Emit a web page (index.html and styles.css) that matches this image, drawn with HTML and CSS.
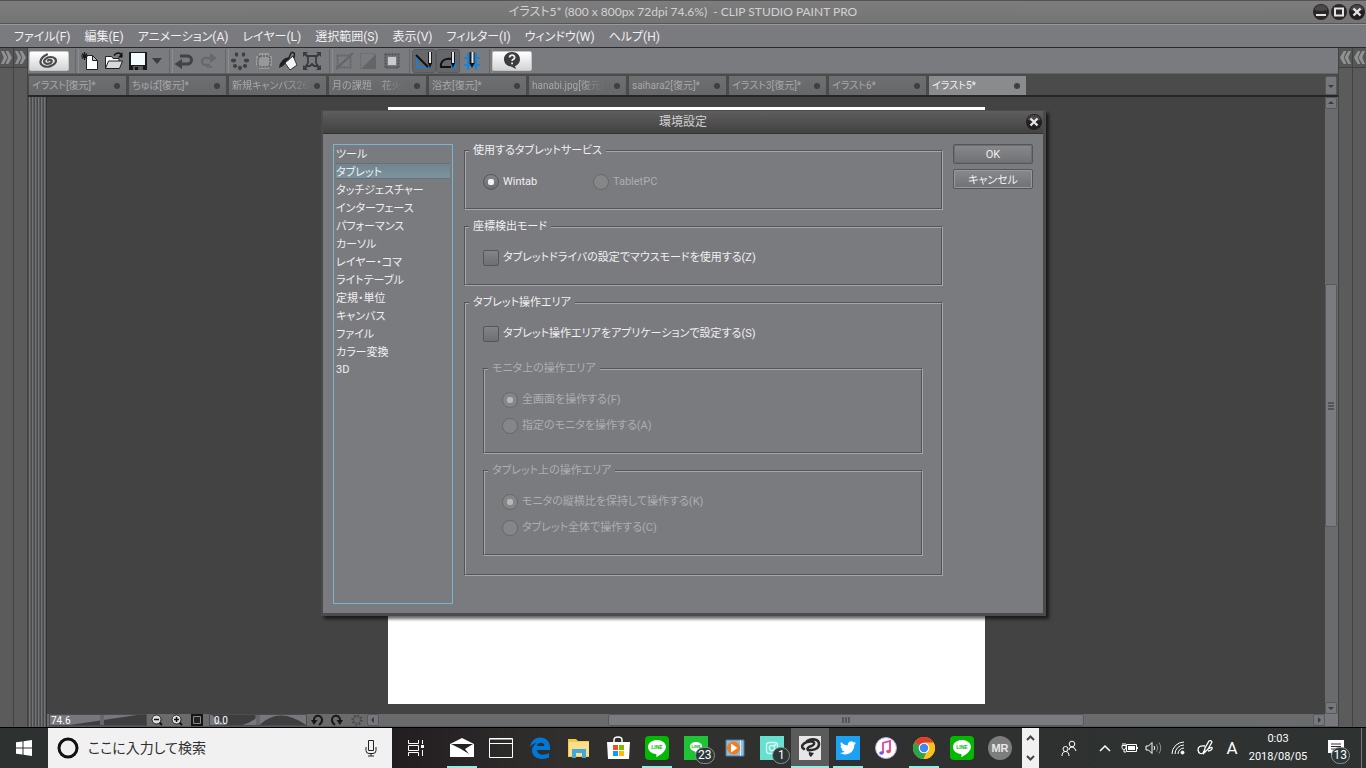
FILE: index.html
```html
<!DOCTYPE html>
<html lang="ja">
<head>
<meta charset="utf-8">
<title>CLIP STUDIO PAINT PRO</title>
<link rel="stylesheet" href="styles.css">
</head>
<body>
<svg class="defs" aria-hidden="true">
  <symbol id="close" viewBox="0 0 16 16"><circle cx="8" cy="8" r="8" fill="#231f20"/><path d="M1.500 6a6.500 5 0 0 1 13 0q-6.500 2-13 0z" fill="#4a4648"/><path d="M4.500 4.500l7 7M11.500 4.500l-7 7" stroke="#e4e4e4" stroke-width="2.400"/></symbol>
  <symbol id="chev-r" viewBox="0 0 12 14"><path d="M0 0h3l4 7-4 7H0l3-7zM5 0h3l4 7-4 7H5l3-7z" fill="#909193"/></symbol>
  <symbol id="chev-l" viewBox="0 0 12 14"><path d="M12 0H9L5 7l4 7h3L9 7zM7 0H4L0 7l4 7h3L4 7z" fill="#909193"/></symbol>
</svg>

<header class="titlebar">
  <h1>イラスト5* (800 x 800px 72dpi 74.6%)&nbsp; - CLIP STUDIO PAINT PRO</h1>
  <div class="window-buttons">
    <button aria-label="最小化"><svg viewBox="0 0 16 16"><circle cx="8" cy="8" r="8" fill="#2b2728"/><path d="M1.500 6a6.500 5 0 0 1 13 0q-6.500 2-13 0z" fill="#4c484a"/><path d="M3 11h10" stroke="#e4e4e4" stroke-width="2"/></svg></button>
    <button aria-label="最大化"><svg viewBox="0 0 16 16"><circle cx="8" cy="8" r="8" fill="#2b2728"/><path d="M4 4.500h8v7H4z" fill="none" stroke="#e4e4e4" stroke-width="2"/></svg></button>
    <button aria-label="閉じる"><svg><use href="#close"/></svg></button>
  </div>
</header>

<nav class="menubar">
  <button>ファイル(F)</button><button>編集(E)</button><button>アニメーション(A)</button><button>レイヤー(L)</button><button>選択範囲(S)</button><button>表示(V)</button><button>フィルター(I)</button><button>ウィンドウ(W)</button><button>ヘルプ(H)</button>
</nav>

<div class="workspace">
  <aside class="dock"><button aria-label="開く"><svg><use href="#chev-r"/></svg></button></aside>
  <aside class="dock"><button aria-label="開く"><svg><use href="#chev-r"/></svg></button></aside>

  <main class="editor">
    <div class="toolbar">
      <button class="wide" aria-label="CLIP STUDIO"><svg width="22" height="16" viewBox="0 0 22 16"><path d="M10 7.500c2-1.500 4.500-.5 3.500 1.500S8 11.500 6.500 9.500 8.500 4 12.500 4 19 6.500 17.500 9.500 10 15 5.500 13 1 5.500 9 1.500" fill="none" stroke="#4b4b4d" stroke-width="2.200" stroke-linecap="round"/></svg></button>
      <i class="sep"></i>
      <button aria-label="新規"><svg width="20" height="20" viewBox="0 0 20 20"><path d="M6.500 4.500h6l5 5v9h-11z" fill="#fff" stroke="#222"/><path d="M12.500 4.500v5h5z" fill="#bbb" stroke="#222"/><path d="M4.500 1v8M1 5h7M2 2.500l5 5M7 2.500l-5 5" stroke="#1b1b1b" stroke-width="1.200"/></svg></button>
      <button aria-label="開く"><svg width="20" height="20" viewBox="0 0 20 20"><path d="M1.500 17.500v-12h6l1.500 2h6v3" fill="#fff" stroke="#222"/><path d="M1.500 17.500l3-7.500h14l-3 7.500z" fill="#d9d9d9" stroke="#222"/><path d="M10 4.500q3-4 7-1.500" fill="none" stroke="#111" stroke-width="1.600"/><path d="M18.500 1v5.500H14z" fill="#111"/></svg></button>
      <button aria-label="保存"><svg width="20" height="20" viewBox="0 0 20 20"><path d="M1 1h18v18H1z" fill="#19191b"/><path d="M3 2h14v12H3z" fill="#f4fbfd"/><path d="M5 15h10v4H5z" fill="#55565a"/><path d="M7 16h3v3H7z" fill="#111"/></svg></button>
      <button class="arrow" aria-label="その他"><svg width="10" height="6" viewBox="0 0 10 6"><path d="M0 0h10L5 6z" fill="#3c3c3e"/></svg></button>
      <i class="sep"></i>
      <button aria-label="取り消し"><svg width="20" height="18" viewBox="0 0 20 18"><path d="M6 4h7.500a4 4 0 0 1 0 8H6" fill="none" stroke="#414244" stroke-width="3"/><path d="M8 7v10l-7.500-5z" fill="#414244"/></svg></button>
      <button aria-label="やり直し"><svg width="20" height="18" viewBox="0 0 20 18"><path d="M12 13H6a4 4 0 0 1 0-7H14" fill="none" stroke="#67686b" stroke-width="2.400"/><path d="M12 1v10l7-5zM9 14h2v2H9zM12 14h2v2h-2z" fill="#67686b"/></svg></button>
      <i class="sep"></i>
      <button aria-label="消去"><svg width="20" height="20" viewBox="0 0 20 20" fill="#3f4042"><ellipse cx="6.500" cy="3.500" rx="1.700" ry="2.200"/><ellipse cx="13.500" cy="3.500" rx="1.700" ry="2.200"/><ellipse cx="3.500" cy="9.500" rx="2.600" ry="1.900"/><ellipse cx="16.500" cy="9.500" rx="2.600" ry="1.900"/><circle cx="5" cy="15" r="2.100"/><circle cx="15" cy="15" r="2.100"/><ellipse cx="10" cy="17" rx="1.900" ry="2.200"/></svg></button>
      <button aria-label="選択範囲外を消去"><svg width="20" height="20" viewBox="0 0 20 20"><path d="M5 2h10v16H5zM2 5h16v10H2z" fill="#98999b"/><path d="M6 5h8l2 2v7l-2 2H6l-2-2V7z" fill="#97989a" stroke="#5b5c5e" stroke-dasharray="2 1" stroke-width="1.500"/></svg></button>
      <button aria-label="塗りつぶし"><svg width="20" height="20" viewBox="0 0 20 20"><path d="M12 6Q2 7 1 17q5-2 8-6z" fill="#202022"/><path d="M7 12l8-7 4 9-7 5z" fill="#f4f4f4" stroke="#333"/><path d="M10 9l3-7q2-1.500 3.500.5L16 7" fill="none" stroke="#222" stroke-width="1.500"/></svg></button>
      <button aria-label="拡大縮小"><svg width="20" height="20" viewBox="0 0 20 20"><path d="M2 2l4 4M18 2l-4 4M2 18l4-4M18 18l-4-4" stroke="#3a3b3d" stroke-width="2"/><path d="M1 1h5L1 6zM19 1h-5l5 5zM1 19h5l-5-5zM19 19h-5l5-5z" fill="#3a3b3d"/><path d="M6 5h8v6q0 2 2 4h-4l-2-2-2 2H4q2-2 2-4z" fill="none" stroke="#3a3b3d" stroke-width="1.800"/></svg></button>
      <i class="sep"></i>
      <button aria-label="選択を解除"><svg width="20" height="20" viewBox="0 0 20 20"><path d="M3.500 4.500h13v12h-13z" fill="none" stroke="#646567" stroke-width="2" stroke-dasharray="2 1"/><path d="M2 18L19 2" stroke="#646567" stroke-width="2"/></svg></button>
      <button aria-label="選択範囲を反転"><svg width="20" height="20" viewBox="0 0 20 20"><path d="M2.500 2.500h14v15h-14z" fill="none" stroke="#6a6b6d" stroke-dasharray="2 1"/><path d="M18 3v15H3z" fill="#646567"/></svg></button>
      <button aria-label="選択範囲の境界線"><svg width="20" height="20" viewBox="0 0 20 20"><path d="M3.500 3.500h13v13h-13z" fill="none" stroke="#4d4e50" stroke-width="2" stroke-dasharray="2 1"/><path d="M5 5h10v10H5z" fill="#77787b"/><path d="M6 6h8v8H6z" fill="#cbcbcb"/></svg></button>
      <i class="sep"></i>
      <button class="on" aria-label="定規にスナップ"><svg width="20" height="20" viewBox="0 0 20 20"><path d="M3 4v12h13" fill="none" stroke="#1683dc" stroke-width="1.500"/><path d="M2 4l12 12" stroke="#111" stroke-width="2"/><path d="M16 1v12" stroke="#1a1a1c" stroke-width="4"/><path d="M16 1v11" stroke="#e2e2e2" stroke-width="2"/><path d="M14 12h4l-2 5z" fill="#111"/></svg></button>
      <button class="on" aria-label="特殊定規にスナップ"><svg width="20" height="20" viewBox="0 0 20 20"><path d="M2 16h15V9" fill="none" stroke="#1683dc" stroke-width="2"/><path d="M13 16H3q-1-4 3-7 3-2 7-1" fill="none" stroke="#111" stroke-width="2"/><path d="M15 1v12" stroke="#1a1a1c" stroke-width="4"/><path d="M15 1v11" stroke="#e2e2e2" stroke-width="2"/><path d="M13 12h4l-2 5z" fill="#111"/></svg></button>
      <button aria-label="グリッドにスナップ"><svg width="20" height="20" viewBox="0 0 20 20"><path d="M6 2v17M14 2v17M2 7h16M2 14h16" stroke="#1683dc" stroke-width="2"/><path d="M10 1v12" stroke="#1a1a1c" stroke-width="5"/><path d="M10.500 1v11" stroke="#e2e2e2" stroke-width="2"/><path d="M7.500 12h5L10 17z" fill="#111"/></svg></button>
      <i class="sep"></i>
      <button class="wide" aria-label="ヘルプ"><svg width="18" height="17" viewBox="0 0 18 17"><path d="M9 0c5 0 8 3.200 8 7.200 0 3.600-2.500 6.100-5 6.900L13 17l-5-2.600C4 14.200 1 11.300 1 7.200 1 3.200 4 0 9 0z" fill="#3c3c3e"/><path d="M6.500 5.500q.3-2.300 2.600-2.300T11.600 5.400Q11.600 6.800 10 7.500q-.9.500-.9 1.600M9.100 10.500v1.800" fill="none" stroke="#eee" stroke-width="1.800"/></svg></button>
    </div>

    <div class="tabs">
      <button class="tab"><span>イラスト[復元]*</span><i></i></button>
      <button class="tab"><span>ちゅぱ[復元]*</span><i></i></button>
      <button class="tab"><span class="fade">新規キャンバス26[</span><i></i></button>
      <button class="tab"><span class="fade">月の課題　花火[</span><i></i></button>
      <button class="tab"><span>浴衣[復元]*</span><i></i></button>
      <button class="tab"><span class="fade">hanabi.jpg[復元]</span><i></i></button>
      <button class="tab"><span>saihara2[復元]*</span><i></i></button>
      <button class="tab"><span>イラスト3[復元]*</span><i></i></button>
      <button class="tab"><span>イラスト6*</span><i></i></button>
      <button class="tab active"><span>イラスト5*</span><i></i></button>
      <button class="small-button tab-list" aria-label="タブ一覧"><svg viewBox="0 0 12 12"><path d="M3 5h6L6 8z"/></svg></button>
    </div>

    <div class="view">
      <div class="grip-strip"></div>
      <div class="view-main">
        <div class="stage"><div class="paper"></div></div>
        <div class="vscroll">
          <button class="small-button" aria-label="上へ"><svg viewBox="0 0 12 12"><path d="M3 7h6L6 4z"/></svg></button>
          <div class="vtrack"><div class="vthumb"><i></i><i></i><i></i></div></div>
          <button class="small-button" aria-label="下へ"><svg viewBox="0 0 12 12"><path d="M3 5h6L6 8z"/></svg></button>
        </div>
        <div class="statusbar">
          <label class="slider"><svg viewBox="0 0 97 11" preserveAspectRatio="none"><path d="M20 11h77V0H88z" fill="#3e3e40"/></svg><span>74.6</span><input type="range" value="54" aria-label="拡大率"></label>
          <button aria-label="縮小"><svg viewBox="0 0 12 12"><path d="M8 8l3 3" stroke="#111" stroke-width="2"/><circle cx="5.500" cy="5.500" r="4.500" fill="#ddd" stroke="#222"/><path d="M3 5.500h5" stroke="#111" stroke-width="1.500"/></svg></button>
          <button aria-label="拡大"><svg viewBox="0 0 12 12"><path d="M8 8l3 3" stroke="#111" stroke-width="2"/><circle cx="5.500" cy="5.500" r="4.500" fill="#ddd" stroke="#222"/><path d="M3 5.500h5M5.500 3v5" stroke="#111" stroke-width="1.500"/></svg></button>
          <button aria-label="全体表示"><svg viewBox="0 0 12 12"><path d="M0 0h12v12H0z" fill="#151515"/><path d="M2.500 2.500h7v7h-7z" fill="#222" stroke="#8a8a8a"/></svg></button>
          <label class="slider rotate"><svg viewBox="0 0 97 11" preserveAspectRatio="none"><path d="M2 0Q22 22 46 4V0zM50 11Q70-10 97 11z" fill="#3e3e40"/></svg><span>0.0</span><input type="range" value="50" aria-label="回転"></label>
          <button aria-label="左回転"><svg viewBox="0 0 12 12"><path d="M3 8V5.500a4 4 0 0 1 8 .5q0 3-3 5" fill="none" stroke="#181818" stroke-width="2"/><path d="M0 6h6.500L3 11z" fill="#181818"/></svg></button>
          <button aria-label="右回転"><svg viewBox="0 0 12 12"><path d="M9 8V5.500a4 4 0 0 0-8 .5q0 3 3 5" fill="none" stroke="#181818" stroke-width="2"/><path d="M12 6H5.500L9 11z" fill="#181818"/></svg></button>
          <button aria-label="回転をリセット"><svg viewBox="0 0 12 12"><circle cx="6" cy="6" r="4.500" fill="none" stroke="#454547" stroke-width="2" stroke-dasharray="1.500 2"/><circle cx="6" cy="6" r="3.500" fill="none" stroke="#505153"/></svg></button>
          <button class="small-button" aria-label="左へ"><svg viewBox="0 0 12 12"><path d="M7 3v6L4 6z"/></svg></button>
          <div class="htrack"><div class="hthumb"><i></i><i></i><i></i></div></div>
          <button class="small-button" aria-label="右へ"><svg viewBox="0 0 12 12"><path d="M5 3v6l3-3z"/></svg></button>
          <div class="corner"></div>
        </div>
      </div>
    </div>
  </main>

  <aside class="dock right"><button aria-label="開く"><svg><use href="#chev-l"/></svg></button></aside>
  <aside class="dock right"><button aria-label="開く"><svg><use href="#chev-l"/></svg></button></aside>
</div>

<section class="dialog" role="dialog" aria-labelledby="dlg-title">
  <header><h2 id="dlg-title">環境設定</h2><button aria-label="閉じる"><svg><use href="#close"/></svg></button></header>
  <form class="dialog-body">
    <ul class="categories">
      <li><button type="button">ツール</button></li>
      <li><button type="button" class="selected">タブレット</button></li>
      <li><button type="button">タッチジェスチャー</button></li>
      <li><button type="button">インターフェース</button></li>
      <li><button type="button">パフォーマンス</button></li>
      <li><button type="button">カーソル</button></li>
      <li><button type="button">レイヤー・コマ</button></li>
      <li><button type="button">ライトテーブル</button></li>
      <li><button type="button">定規・単位</button></li>
      <li><button type="button">キャンバス</button></li>
      <li><button type="button">ファイル</button></li>
      <li><button type="button">カラー変換</button></li>
      <li><button type="button">3D</button></li>
    </ul>
    <div class="groups">
      <fieldset>
        <legend>使用するタブレットサービス</legend>
        <div class="pair">
          <label><input type="radio" name="service" checked>Wintab</label>
          <label class="off"><input type="radio" name="service" disabled>TabletPC</label>
        </div>
      </fieldset>
      <fieldset>
        <legend>座標検出モード</legend>
        <label><input type="checkbox">タブレットドライバの設定でマウスモードを使用する(Z)</label>
      </fieldset>
      <fieldset>
        <legend>タブレット操作エリア</legend>
        <label class="area-toggle"><input type="checkbox">タブレット操作エリアをアプリケーションで設定する(S)</label>
        <div class="groups">
          <fieldset disabled>
            <legend>モニタ上の操作エリア</legend>
            <div class="stack">
              <label><input type="radio" name="monitor" checked>全画面を操作する(F)</label>
              <label><input type="radio" name="monitor">指定のモニタを操作する(A)</label>
            </div>
          </fieldset>
          <fieldset disabled>
            <legend>タブレット上の操作エリア</legend>
            <div class="stack">
              <label><input type="radio" name="tablet" checked>モニタの縦横比を保持して操作する(K)</label>
              <label><input type="radio" name="tablet">タブレット全体で操作する(C)</label>
            </div>
          </fieldset>
        </div>
      </fieldset>
    </div>
    <div class="actions">
      <button type="button" class="default">OK</button>
      <button type="button">キャンセル</button>
    </div>
  </form>
</section>

<footer class="taskbar">
  <button class="start" aria-label="スタート"><svg width="16" height="16" viewBox="0 0 16 16" fill="#fff"><path d="M0 2.300l6.500-.9v6.100H0zM7.500 1.200L16 0v7.500H7.500zM0 8.500h6.500v6.100L0 13.700zM7.500 8.500H16V16l-8.500-1.200z"/></svg></button>
  <div class="search">
    <svg width="22" height="22" viewBox="0 0 22 22"><circle cx="11" cy="11" r="9" fill="none" stroke="#111" stroke-width="3"/></svg>
    <input type="text" placeholder="ここに入力して検索" aria-label="検索">
    <svg width="12" height="18" viewBox="0 0 12 18" fill="none" stroke="#222"><path d="M3.500 1.500h5v10h-5zM1 8v3.500q0 3 3 3h4q3 0 3-3V8M6 14.500V17M3 17h6"/></svg>
  </div>
  <button class="taskview" aria-label="タスクビュー"><svg width="18" height="16" viewBox="0 0 18 16" fill="none" stroke="#fff"><path d="M1.500 0v3.500h10V0M1.500 5.500h10v5h-10zM1.500 16v-3.500h10V16M15.500 0v4M15.500 10v6"/><path d="M14 5h3v3h-3z" fill="#fff" stroke="none"/></svg></button>
  <div class="apps">
    <button class="open" aria-label="メール"><svg viewBox="0 0 24 24"><path d="M0 8L12 2l12 6v13H0z" fill="#fff"/><path d="M1 8h22l-8 5 4 5-8-5z" fill="#222"/></svg></button>
    <button aria-label="ウィンドウ"><svg viewBox="0 0 24 24"><path d="M.5 2.500h23v19H.5zM.5 7.500h23" fill="none" stroke="#fff"/><path d="M1 3h22v1H1z" fill="#999"/></svg></button>
    <button aria-label="Edge"><svg viewBox="0 0 24 24"><path d="M2 11C3 4.500 7.500 1.500 12.300 1.500 18.500 1.500 22 6 22 11.500V14H9c0 5 7 6 12 3v4.500C13 25 3.500 22 4 14c.2-3 2-5.500 5-7C5.500 7.200 3.500 9 2 11zm7-1h7.500C16.500 5.500 9.500 5.500 9 10z" fill="#0078d7"/></svg></button>
    <button aria-label="エクスプローラー"><svg viewBox="0 0 24 24"><path d="M1 3h8l2 2h11v16H1z" fill="#f3c64c"/><path d="M2 6h20v14H2z" fill="#fbe08b"/><path d="M5 13h14v9h-4v-5H9v5H5z" fill="#41a8dd"/></svg></button>
    <button aria-label="ストア"><svg viewBox="0 0 24 24"><path d="M8 7V4q0-3 4-3t4 3v3" fill="none" stroke="#fff" stroke-width="1.500"/><path d="M1 6h23l-1 17H2z" fill="#fff"/><path d="M7 9h5v5H7z" fill="#f25022"/><path d="M13 9h5v5h-5z" fill="#7fba00"/><path d="M7 15h5v5H7z" fill="#00a4ef"/><path d="M13 15h5v5h-5z" fill="#ffb900"/></svg></button>
    <button class="open" aria-label="LINE"><svg viewBox="0 0 24 24"><rect width="24" height="24" rx="4" fill="#00b900"/><path d="M12 4c-5 0-9 3.100-9 7.100 0 3.600 3.300 6.500 7.800 7 .7.100.9.700.5 3.100 4-2 9.700-5.800 9.700-10.100C21 7.100 17 4 12 4z" fill="#fff"/><text x="12" y="13" text-anchor="middle" class="line-word">LINE</text></svg></button>
    <button aria-label="LINE 通知"><svg viewBox="0 0 24 24"><path d="M0 0h24v24H0z" fill="#1fc336"/><path d="M12 6c-3.500 0-6 2-6 4.500S8 15 11 15.500q1 .5 0 2c3-1.500 7-4 7-7S15.500 6 12 6z" fill="#fff"/><text x="12" y="12" text-anchor="middle" class="line-word mini">LINE</text></svg><span class="badge">23</span></button>
    <button aria-label="メディアプレーヤー"><svg viewBox="0 0 24 24"><path d="M3 4h18v16H3z" fill="#8fc0e0" stroke="#4d7c9e"/><path d="M17.500 4v16" stroke="#dbe9f2"/><circle cx="10.500" cy="12" r="6.500" fill="#ef7d22"/><path d="M8 7.500v9l6.500-4.500z" fill="#fff"/></svg></button>
    <button aria-label="Instagram"><svg viewBox="0 0 24 24"><path d="M0 0h24v24H0z" fill="#68e0cf"/><g fill="none" stroke="#d9fff9" stroke-width="1.300"><rect x="6.500" y="6.500" width="11" height="11" rx="3"/><circle cx="12" cy="12" r="2.700"/></g><circle cx="15" cy="9" r="1" fill="#d9fff9"/></svg><span class="badge">1</span></button>
    <button class="open current" aria-label="CLIP STUDIO PAINT"><svg viewBox="0 0 24 24"><path d="M1 0h22v24H1z" fill="#e6e6e6"/><path d="M13 14c-3 1-5-1-2-3 2-1 4-1 5-3 1-3-4-3-7-2-4 1-7 5-3 7M9 5c5-3 12-2 12 3 0 4-4 6-8 6" fill="none" stroke="#2b2b2b" stroke-width="2.600" stroke-linecap="round"/><path d="M11 16l5 1-3 4q-3-2-2-5z" fill="#2b2b2b"/></svg></button>
    <button class="open" aria-label="Twitter"><svg viewBox="0 0 24 24"><path d="M0 0h24v24H0z" fill="#1da1f2"/><path d="M20 6.900c-.6.300-1.200.5-1.900.5.700-.4 1.200-1 1.400-1.800-.6.400-1.300.7-2.100.8a3.300 3.300 0 0 0-5.600 3C9 9.300 6.600 8 5 6c-.9 1.500-.4 3.400 1 4.400-.5 0-1-.2-1.500-.4 0 1.600 1.100 2.900 2.600 3.200-.5.200-1 .2-1.500.1.400 1.300 1.600 2.200 3.100 2.300A6.600 6.600 0 0 1 4 17c5.700 3.500 14.500.4 14.400-8.500.6-.4 1.200-1 1.600-1.600z" fill="#fff"/></svg></button>
    <button aria-label="iTunes"><svg viewBox="0 0 24 24"><circle cx="12" cy="12" r="10.500" fill="#fff" stroke="#b8a5dc"/><path d="M9 17V7l7-2v10" fill="none" stroke="#d946a6" stroke-width="1.800"/><ellipse cx="7.500" cy="17" rx="2.300" ry="1.800" fill="#6a5be0"/><ellipse cx="14.500" cy="15.500" rx="2.300" ry="1.800" fill="#eb4a6e"/></svg></button>
    <button class="open" aria-label="Chrome"><svg viewBox="0 0 24 24"><circle cx="12" cy="12" r="11" fill="#fbc116"/><path d="M12 12L2.500 6.500A11 11 0 0 1 21.500 6.500z" fill="#e33b2e"/><path d="M12 12l5 3-5.500 8A11 11 0 0 1 2.500 6.500z" fill="#2ba24c"/><path d="M14 17l-2.500 6A11 11 0 0 0 21.500 6.500H12l4.500 3z" fill="#fbc116"/><circle cx="12" cy="12" r="5.300" fill="#fff"/><circle cx="12" cy="12" r="4.200" fill="#4285f4"/></svg></button>
    <button aria-label="LINE"><svg viewBox="0 0 24 24"><rect width="24" height="24" rx="4" fill="#00b900"/><path d="M12 4c-5 0-9 3.100-9 7.100 0 3.600 3.300 6.500 7.800 7 .7.100.9.700.5 3.100 4-2 9.700-5.800 9.700-10.100C21 7.100 17 4 12 4z" fill="#fff"/><text x="12" y="13" text-anchor="middle" class="line-word">LINE</text></svg></button>
    <button aria-label="MR"><svg viewBox="0 0 24 24"><circle cx="12" cy="12" r="12" fill="#7d7d7d"/><text x="12" y="16" text-anchor="middle" class="mr-word">MR</text></svg></button>
  </div>
  <div class="spin">
    <button aria-label="上"><svg width="9" height="6" viewBox="0 0 9 6"><path d="M1 5l3.500-3.500L8 5"/></svg></button>
    <button aria-label="下"><svg width="9" height="6" viewBox="0 0 9 6"><path d="M1 1l3.500 3.500L8 1"/></svg></button>
  </div>
  <div class="tray">
    <button class="people" aria-label="People"><svg width="16" height="16" viewBox="0 0 16 16"><circle cx="11" cy="4" r="2.800"/><circle cx="4.500" cy="9" r="2.500"/><path d="M8 10q0-3 3-3t4 4M1 16q0-4.500 3.500-4.500T8 16"/></svg></button>
    <button aria-label="隠れているインジケーター"><svg width="12" height="8" viewBox="0 0 12 8"><path d="M1 7l5-5 5 5" stroke-width="1.500"/></svg></button>
    <button aria-label="電源"><svg width="17" height="12" viewBox="0 0 17 12"><path d="M5.500 2.500h10v7h-10zM1 3.500h4v2q0 2-2 2t-2-2zM2 1v2M4 1v2M3 8v2h2M16.500 5v2"/><path d="M7 4h7v4H7z" fill="#fff" stroke="none"/></svg></button>
    <button aria-label="音量"><svg width="17" height="14" viewBox="0 0 17 14"><path d="M1 5h2.500L7 1.500v11L3.500 9H1zM9 5q1.500 2 0 4"/><path d="M11.500 3.500q2.500 3.500 0 7M14 1.500q3.500 5.500 0 11" stroke="#8b8f8f"/></svg></button>
    <button class="wifi" aria-label="ネットワーク"><svg width="14" height="14" viewBox="0 0 14 14"><path d="M1 13A12 12 0 0 1 13 1M4 13a9 9 0 0 1 9-9M7 13a6 6 0 0 1 6-6" /><circle cx="11.500" cy="11.500" r="1.500" fill="#fff"/></svg></button>
    <button class="pen" aria-label="ペン"><svg width="17" height="16" viewBox="0 0 17 16"><path d="M7 13l1-5 4-7q2-1 3 1l-4 7zM8 6q-7-1-7 4 1 5 5 3l2-4M11 9q5-3 4 0-1 2-4 2" stroke-width="1.300"/></svg></button>
    <button class="ime">A</button>
    <button class="clock"><span>0:03</span><span>2018/08/05</span></button>
    <button class="notice" aria-label="通知"><svg width="18" height="17" viewBox="0 0 18 17"><path d="M1 0h16v13H8l-4 4v-4H1z" fill="#fff" stroke="none"/><path d="M4 4h10M4 6.500h10M4 9h7" stroke="#2d3131"/></svg><span class="badge">13</span></button>
    <button class="desktop" aria-label="デスクトップの表示"></button>
  </div>
</footer>
</body>
</html>
```
FILE: styles.css
```css
* { box-sizing: border-box; }

body {
  margin: 0;
  height: 100vh;
  display: flex;
  flex-direction: column;
  overflow: hidden;
  background: #434343;
  color: #f0f0f0;
  font-family: Roboto, "Noto Sans CJK JP", sans-serif;
  font-feature-settings: "palt";
  font-size: 12px;
}

button {
  margin: 0;
  padding: 0;
  border: 0;
  background: none;
  color: inherit;
  font: inherit;
  font-feature-settings: inherit;
  display: flex;
  align-items: center;
  justify-content: center;
}

svg { display: block; flex: none; }
h1, h2, ul { margin: 0; padding: 0; font-size: 12px; font-weight: 400; list-style: none; }
.defs { position: absolute; width: 0; height: 0; }

/* Title and menus */
.titlebar {
  flex: none;
  height: 24px;
  display: grid;
  grid-template-columns: 1fr auto 1fr;
  align-items: center;
  border-top: 1px solid #535353;
  border-bottom: 1px solid #565656;
  background: linear-gradient(#7d7d7d, #747474);
  color: #d2d2d2;
}
.titlebar h1 { grid-column: 2; line-height: 20px; font-family: Lato, "Noto Sans CJK JP", sans-serif; }
.window-buttons { display: flex; gap: 2px; justify-self: end; padding-right: 1px; }
.window-buttons button, .window-buttons svg { width: 16px; height: 16px; }

.menubar {
  flex: none;
  height: 24px;
  display: flex;
  gap: 14px;
  padding: 0 0 2px 14px;
  border-top: 1px solid #98999c;
  border-bottom: 1px solid #29292b;
  background: #7a7b7f;
}

/* Work area */
.workspace { flex: 1; min-height: 0; display: flex; background: #5b5b5b; }
.dock { width: 14px; flex: none; border-right: 1px solid #424344; background: #5b5b5b; }
.dock.right { border-right: 0; border-left: 1px solid #424344; }
.dock button { width: 100%; height: 20px; border-bottom: 1px solid #404040; background: #565656; }
.dock svg { width: 11px; height: 13px; }
.editor { flex: 1; min-width: 0; display: flex; flex-direction: column; }

.toolbar {
  flex: none;
  height: 26px;
  display: flex;
  align-items: center;
  padding-left: 1px;
  border-bottom: 1px solid #636467;
  background: #7a7b7f;
}
.toolbar button { width: 24px; height: 24px; }
.toolbar .arrow { width: 14px; }
.toolbar .wide {
  width: 40px;
  height: 20px;
  border: 1px solid #c4c4c4;
  border-radius: 2px;
  background: linear-gradient(#fff, #d4d4d4);
}
.toolbar .wide:first-child { margin-right: 1px; }
.toolbar .on { border: 1px solid #5a5b5e; border-radius: 3px; background: #65676b; }
.sep { width: 8px; height: 24px; padding-left: 5px; }
.sep::before { content: ""; display: block; width: 2px; height: 24px; border-left: 1px solid #66676a; border-right: 1px solid #8c8d90; }

.tabs {
  flex: none;
  height: 23px;
  display: flex;
  gap: 3px;
  padding: 2px 0 0 1px;
  border-bottom: 2px solid #26262a;
  background: #4b4b4b;
}
.tab {
  width: 97px;
  height: 19px;
  padding: 0 6px 0 3px;
  justify-content: space-between;
  background: linear-gradient(#6e6f71, #666769);
  color: #a7a8a9;
  font-size: 10px;
}
.tab span { white-space: nowrap; line-height: 18px; }
.tab .fade {
  -webkit-mask-image: linear-gradient(90deg, #000 70%, transparent);
  mask-image: linear-gradient(90deg, #000 70%, transparent);
}
.tab i { width: 6px; height: 6px; border-radius: 50%; background: #3f3f41; }
.tab.active { background: #8a8b8d; color: #f0f0f0; }

.small-button {
  flex: none;
  width: 12px;
  height: 12px;
  border: 1px solid #58595b;
  border-radius: 2px;
  background: #77787b;
}
.small-button svg { width: 12px; height: 12px; fill: #3b3b3d; }
.tab-list { height: 19px; margin: 0 1px 0 auto; }

.view { flex: 1; min-height: 0; display: flex; background: #434343; }
.grip-strip { width: 18px; flex: none; background: repeating-linear-gradient(90deg, #4a4b4c 0 1px, #737477 1px 2px, #5a5b5d 2px 3px); }
.view-main { flex: 1; min-width: 0; display: grid; grid-template: minmax(0, 1fr) 13px / minmax(0, 1fr) 13px; border-left: 1px solid #333; }
.stage { display: flex; align-items: center; justify-content: center; overflow: hidden; }
.paper { width: 597px; aspect-ratio: 1; flex: none; background: #fff; }

.vscroll { display: flex; flex-direction: column; background: #6a6b6d; }
.vtrack { flex: 1; display: flex; align-items: center; }
.vthumb, .hthumb {
  display: flex;
  gap: 1px;
  align-items: center;
  justify-content: center;
  border: 1px solid #58595b;
  border-radius: 2px;
  background: #7a7b7f;
}
.vthumb { width: 12px; height: 41%; flex-direction: column; }
.vthumb i { width: 6px; height: 2px; background: #545557; }
.hthumb { width: 51%; height: 12px; }
.hthumb i { width: 2px; height: 6px; background: #545557; }

.statusbar {
  grid-column: 1 / -1;
  display: flex;
  align-items: center;
  padding-left: 2px;
  border-bottom: 1px solid #58595b;
  background: #6a6b6d;
}
.statusbar button { width: 20px; flex: none; }
.statusbar svg { width: 12px; height: 12px; }
.statusbar .small-button { width: 12px; }
.statusbar .slider {
  width: 98px;
  height: 12px;
  flex: none;
  display: grid;
  border: 1px solid #4c4d4f;
  background: #77787b;
}
.slider > * { grid-area: 1 / 1; }
.statusbar .slider svg { width: 96px; height: 10px; }
.slider span { padding-left: 1px; font-size: 10px; line-height: 11px; color: #fff; }
.slider input { width: 96px; height: 10px; margin: 0; appearance: none; background: none; }
.slider input::-webkit-slider-thumb { appearance: none; width: 4px; height: 10px; background: #66676a; }
.rotate { margin-left: 2px; }
.rotate span { padding-left: 4px; }
.htrack { flex: 1; display: flex; justify-content: center; }
.corner { width: 13px; height: 12px; background: #77787b; }

/* Preferences dialog */
.dialog {
  position: absolute;
  top: 110px;
  left: 50%;
  width: 725px;
  margin-left: -362px;
  border: solid #4b4b4b;
  border-width: 1px 3px 3px 2px;
  background: #7a7b7f;
  box-shadow: 3px 3px 3px rgba(0, 0, 0, .6);
}
.dialog header {
  height: 23px;
  display: grid;
  grid-template-columns: 1fr auto 1fr;
  align-items: center;
  border-bottom: 1px solid #333;
  background: linear-gradient(#5e5e5e, #424242);
  color: #cfcfcf;
}
.dialog h2 { grid-column: 2; line-height: 20px; }
.dialog header button { justify-self: end; margin-right: 1px; }
.dialog header svg { width: 16px; height: 16px; }
.dialog-body { display: flex; gap: 10px; padding: 10px 10px 9px; font-size: 11px; }

.categories { width: 120px; height: 460px; margin-right: 1px; padding: 0 2px; border: 1px solid #78b5d3; font-size: 11px; }
.categories button {
  width: 100%;
  height: 16px;
  margin-bottom: 2px;
  justify-content: flex-start;
}
.categories .selected { border: solid #64737b; border-width: 1px 0; background: linear-gradient(#71858f, #7c929c); }

.groups { flex: 1; display: flex; flex-direction: column; gap: 10px; }
fieldset { min-width: 0; margin: 0; padding: 16px 18px 18px 17px; border: 2px groove #a6a7aa; }
legend { margin-left: -14px; padding: 0 4px; line-height: 14px; }
fieldset label { display: flex; align-items: center; gap: 4px; height: 16px; line-height: 16px; white-space: nowrap; }
fieldset input {
  appearance: none;
  width: 16px;
  height: 16px;
  margin: 0;
  display: grid;
  place-content: center;
  border: 1px solid #55565a;
  border-radius: 2px;
  background: linear-gradient(#838487, #6e6f72);
}
input[type="radio"] { border-radius: 50%; }
input[type="radio"]:checked::before { content: ""; width: 6px; height: 6px; border-radius: 2px; background: #f2f2f2; }
input:disabled { background: #858688; border-color: #68696b; }
input[type="radio"]:disabled::before { background: #b8b8b8; }
.off, fieldset:disabled { color: #adaeb0; }
.pair { display: grid; grid-template-columns: 110px auto; }
.stack { display: grid; gap: 10px; }
.area-toggle { margin-bottom: 20px; }

.actions { width: 80px; display: flex; flex-direction: column; gap: 5px; }
.actions button {
  height: 20px;
  border: 1px solid #55565a;
  border-radius: 2px;
  box-shadow: inset 0 0 0 1px #98999b;
  background: linear-gradient(#88898b, #707174);
}
.actions .default { box-shadow: inset 0 0 0 1px #6c6d70; }

/* Taskbar */
.taskbar {
  flex: none;
  height: 41px;
  display: flex;
  border-top: 1px solid #000;
  background: linear-gradient(90deg, #2d3231 0, #2d3231 48px, #211c1f 380px, #312f2e 560px, #2e3130 1000px, #2e3332);
  color: #fff;
}
.start { width: 48px; }
.search { width: 344px; display: flex; align-items: center; gap: 9px; padding: 0 15px 0 9px; background: #f1f1f1; }
.search input { flex: 1; min-width: 0; padding: 0; border: 0; outline: 0; background: none; font: inherit; font-size: 14px; font-feature-settings: "palt"; }
.search input::placeholder { color: #303030; opacity: 1; }
.taskview { width: 48px; margin-right: 3px; }
.apps { flex: 1; display: flex; }
.apps button { flex: 38; position: relative; }
.apps button:nth-child(-n+7) { flex: 39; }
.apps svg { width: 24px; height: 24px; }
.apps .open { background: linear-gradient(#83f3e6, #83f3e6) center bottom / 30px 2px no-repeat; }
.apps .current { background-color: #5b5b5b; background-size: 100% 2px; }
.line-word { fill: #00b900; font: 700 5px "Liberation Sans", sans-serif; }
.line-word.mini { font-size: 4px; }
.mr-word { fill: #e8e8e8; font: 700 11px "Liberation Sans", sans-serif; }
.badge {
  position: absolute;
  right: 1px;
  bottom: 4px;
  min-width: 18px;
  height: 17px;
  padding: 0 2px;
  border: 1px solid #8d9090;
  border-radius: 9px;
  background: #2c3838;
  color: #fff;
  font-size: 12px;
  line-height: 15px;
  text-align: center;
}
.spin { width: 17px; margin-left: 3px; display: flex; flex-direction: column; background: #f1f1f1; }
.spin button { flex: 1; }
.spin svg { fill: none; stroke: #444; stroke-width: 2; }

.tray { display: flex; }
.tray button { width: 24px; }
.tray svg { fill: none; stroke: #fff; }
.tray .people { width: 54px; padding-left: 6px; }
.tray .wifi { width: 26px; }
.tray .pen { width: 28px; }
.tray .ime { width: 26px; font-size: 17px; }
.tray .clock { width: 66px; flex-direction: column; font-size: 11px; line-height: 18px; }
.tray .notice { width: 50px; position: relative; }
.tray .notice .badge { right: 11px; }
.tray .desktop { width: 5px; border-left: 1px solid #777; }
```
